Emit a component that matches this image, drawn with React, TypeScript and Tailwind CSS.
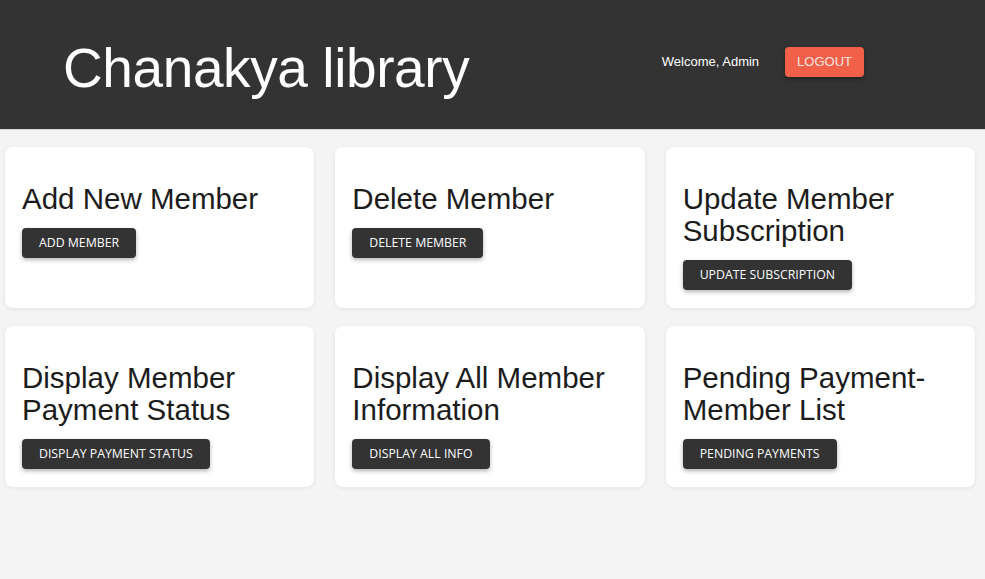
import React from "react";

const cards = [
  { title: "Add New Member", action: "Add Member" },
  { title: "Delete Member", action: "Delete Member" },
  { title: "Update Member Subscription", action: "Update Subscription" },
  { title: "Display Member Payment Status", action: "Display Payment Status" },
  { title: "Display All Member Information", action: "Display All Info" },
  { title: "Pending Payment-Member List", action: "Pending Payments" },
];

export default function App() {
  return (
    <div className="min-h-[579px] bg-[#f4f4f4] font-['Liberation_Sans',Arial,sans-serif]">
      <header className="flex h-[130px] items-center border-b border-[#d6d6d6] bg-[#333333]">
        <h1 className="pl-[63px] pt-[8px] text-[55px] leading-none tracking-[-0.4px] text-white">
          Chanakya library
        </h1>
        <div className="ml-auto mr-[121px] mb-[6px] flex items-center gap-[26px]">
          <span className="text-[13px] text-white">Welcome, Admin</span>
          <button className="h-[30px] rounded-[4px] bg-[#f2604a] px-[12px] text-[13px] text-[#fde5e0] shadow-[0_2px_4px_rgba(0,0,0,0.35)]">
            LOGOUT
          </button>
        </div>
      </header>

      <main className="grid grid-cols-3 gap-x-[21px] gap-y-[18px] pl-[5px] pr-[10px] pt-[17px]">
        {cards.map((card) => (
          <div
            key={card.title}
            className="rounded-[8px] bg-white px-[17px] pb-[18px] pt-[36px] shadow-[0_1px_4px_rgba(0,0,0,0.08)]"
          >
            <h2 className="mb-[13px] text-[29.5px] leading-[32px] text-[#1c1c1c]">
              {card.title}
            </h2>
            <button className="h-[30px] rounded-[4px] bg-[#333333] px-[17px] font-['Open_Sans',sans-serif] text-[12.3px] uppercase text-white shadow-[0_2px_4px_rgba(0,0,0,0.3)]">
              {card.action}
            </button>
          </div>
        ))}
      </main>
    </div>
  );
}
